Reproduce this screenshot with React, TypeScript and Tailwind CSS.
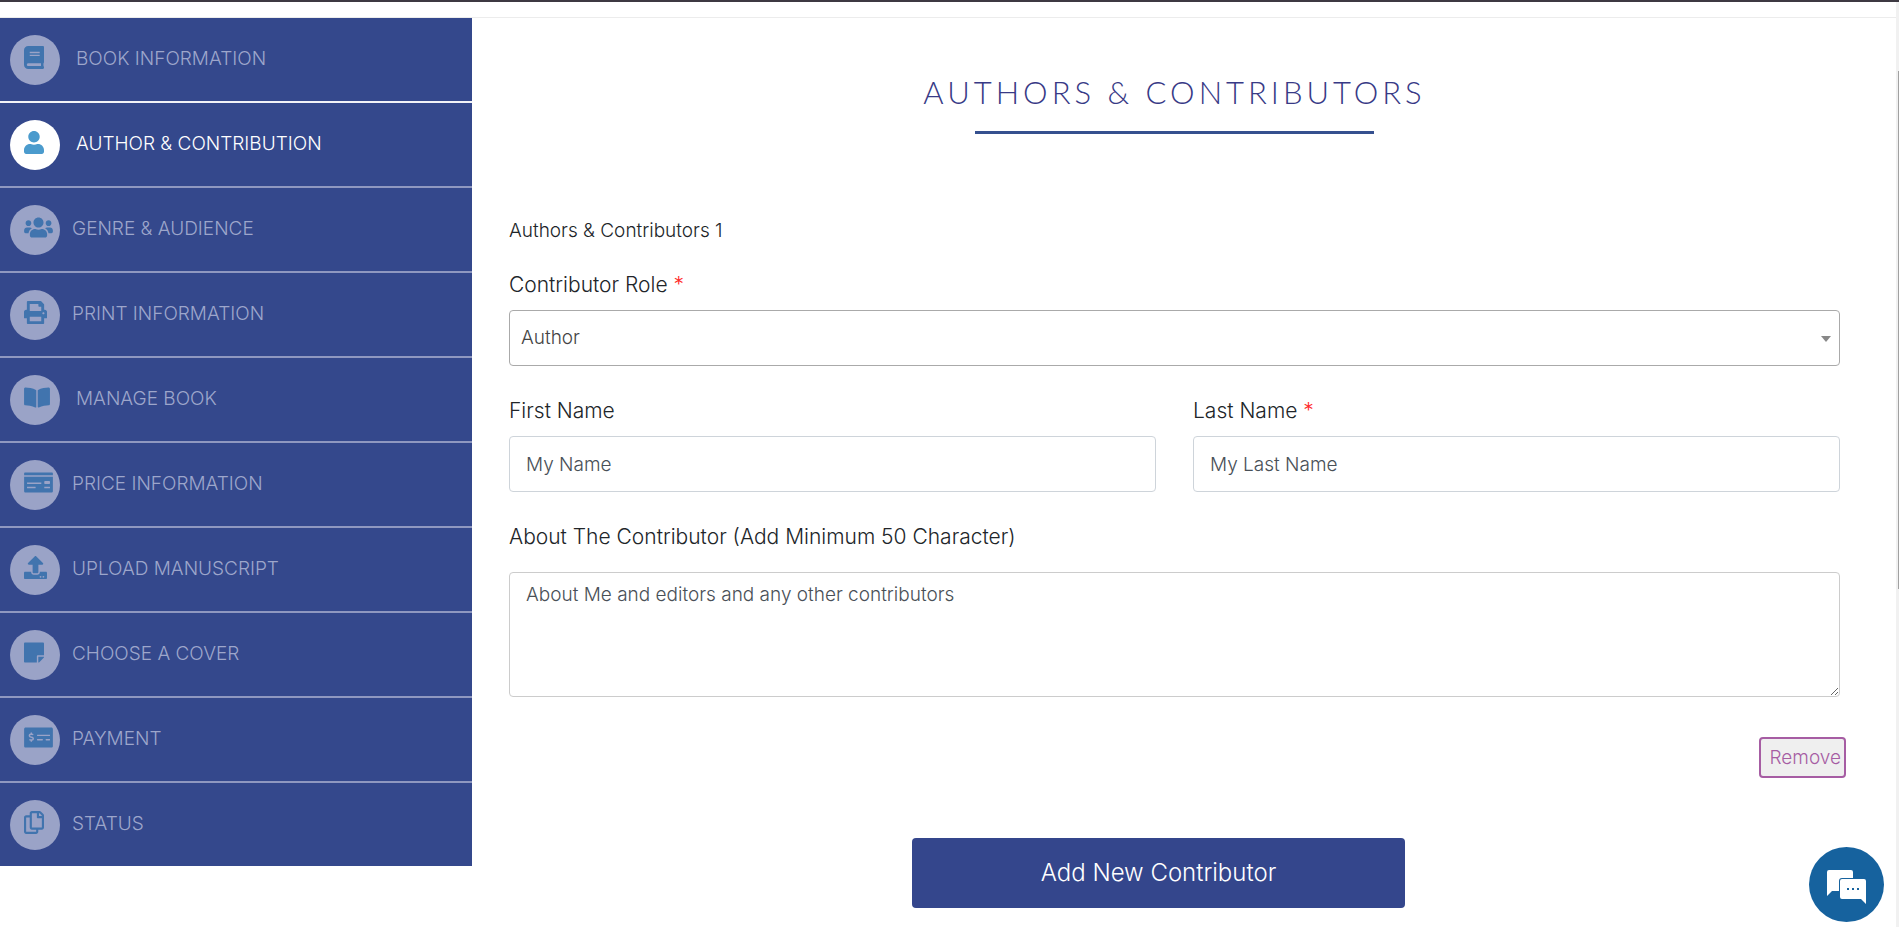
import {ReactNode, useState} from "react";
import {
    FaBook,
    FaBookOpen,
    FaMoneyCheck,
    FaMoneyCheckAlt,
    FaRegCopy,
    FaStickyNote,
    FaUpload,
    FaUser,
    FaUsers
} from "react-icons/fa";

type Step = {
    label: string
    icon: ReactNode
    wide?: boolean
}

const PrintIcon = () => (
    <svg viewBox="0 0 512 512" className="w-[23px] h-[23px]" fill="currentColor" aria-hidden="true">
        <path d="M464 192h-16V81.941a24 24 0 0 0-7.029-16.97L383.029 7.029A24 24 0 0 0 366.059 0H88C74.745 0 64 10.745 64 24v168H48c-26.51 0-48 21.49-48 48v132c0 6.627 5.373 12 12 12h52v104c0 13.255 10.745 24 24 24h336c13.255 0 24-10.745 24-24V384h52c6.627 0 12-5.373 12-12V240c0-26.51-21.49-48-48-48zm-80 256H128v-96h256v96zM128 224V64h192v40c0 13.2 10.8 24 24 24h40v96H128zm304 72c-13.254 0-24-10.746-24-24s10.746-24 24-24 24 10.746 24 24-10.746 24-24 24z"/>
    </svg>
);

const STEPS: Step[] = [
    {label: 'Book Information', icon: <FaBook className="w-5 h-[23px]"/>, wide: true},
    {label: 'Author & Contribution', icon: <FaUser className="w-5 h-[23px]"/>, wide: true},
    {label: 'Genre & Audience', icon: <FaUsers className="w-[29px] h-[23px]"/>},
    {label: 'Print Information', icon: <PrintIcon/>},
    {label: 'Manage Book', icon: <FaBookOpen className="w-[26px] h-[23px]"/>, wide: true},
    {label: 'Price Information', icon: <FaMoneyCheck className="w-[29px] h-[23px]"/>},
    {label: 'Upload Manuscript', icon: <FaUpload className="w-[23px] h-[23px]"/>},
    {label: 'Choose a Cover', icon: <FaStickyNote className="w-5 h-[23px]"/>},
    {label: 'Payment', icon: <FaMoneyCheckAlt className="w-[29px] h-[23px]"/>},
    {label: 'Status', icon: <FaRegCopy className="w-5 h-[23px]"/>},
];

const ACTIVE_STEP = 1;

const borderFor = (index: number) => {
    if (index === STEPS.length - 1) {
        return '';
    }
    return index === ACTIVE_STEP - 1 ? 'border-b-2 border-[#f2f3f8]' : 'border-b-2 border-[#8f98c0]';
}

const Sidebar = () => (
    <nav className="w-1/4 shrink-0 self-start bg-[#34488c]">
        <ul>
            {STEPS.map((step, index) => {
                const active = index === ACTIVE_STEP;
                return (
                    <li key={step.label} className={borderFor(index)}>
                        <a href="#" aria-current={active ? 'step' : undefined}
                           className={`flex items-center h-[83px] px-2.5 ${step.wide ? 'gap-4' : 'gap-3'}`}>
                            <span className={`flex items-start w-[50px] h-[50px] shrink-0 rounded-full pl-3.5 pt-[11px]
                                ${active ? 'bg-white text-[#4b9bcd]' : 'bg-[#9aa3c7] text-[#4174ae]'}`}>
                                <span className="shrink-0">{step.icon}</span>
                            </span>
                            <span className={`uppercase text-[19px] font-light ${active ? 'text-white' : 'text-[#9da6cb]'}`}>
                                {step.label}
                            </span>
                        </a>
                    </li>
                );
            })}
        </ul>
    </nav>
);

const Required = () => <span className="text-[#ff2a2a]">*</span>;

const LABEL = 'block text-[21px] leading-[30px] font-light text-[#212529]';
const INPUT = 'block w-full h-14 mt-2.5 rounded border border-[#ced4da] px-4 text-[19px] font-light text-[#495057]';

const ContributorForm = () => {
    const [role, setRole] = useState('Author');

    return (
        <form className="pl-[37px] pr-12" onSubmit={(e) => e.preventDefault()}>
            <p className="text-[19px] leading-6 font-light text-[#212529]">Authors &amp; Contributors 1</p>

            <label htmlFor="role" className={`${LABEL} mt-[27px]`}>Contributor Role <Required/></label>
            <div className="relative mt-2.5">
                <select id="role" value={role} onChange={(e) => setRole(e.target.value)}
                        className="block w-full h-14 appearance-none rounded border border-[#aaa] bg-white px-[11px] text-[19px] font-light text-[#444]">
                    <option>Author</option>
                    <option>Editor</option>
                    <option>Illustrator</option>
                </select>
                <svg className="absolute right-[9px] top-[26px] pointer-events-none" width="10" height="6" viewBox="0 0 10 6">
                    <path d="M0 0h10L5 6z" fill="#888"/>
                </svg>
            </div>

            <div className="grid grid-cols-2 gap-[37px] mt-[30px]">
                <div>
                    <label htmlFor="first" className={LABEL}>First Name</label>
                    <input id="first" type="text" defaultValue="My Name" className={INPUT}/>
                </div>
                <div>
                    <label htmlFor="last" className={LABEL}>Last Name <Required/></label>
                    <input id="last" type="text" defaultValue="My Last Name" className={INPUT}/>
                </div>
            </div>

            <label htmlFor="about" className={`${LABEL} mt-[30px]`}>About The Contributor (Add Minimum 50 Character)</label>
            <textarea id="about" defaultValue="About Me and editors and any other contributors"
                      className="block w-full h-[125px] mt-5 rounded border border-[#ccc] px-4 py-2 text-[19px] leading-7 font-light text-[#495057]"/>

            <div className="flex justify-end mt-10 -mr-1.5">
                <button type="button"
                        className="h-[41px] rounded border-2 border-[#a65da3] bg-[#efefef] pl-[9px] pr-[3px] text-[19px] leading-none font-light text-[#a65da3]">
                    Remove
                </button>
            </div>

            <div className="flex justify-center mt-[60px] pr-8">
                <button type="button" className="w-[38%] h-[70px] rounded bg-[#34468c] text-2xl font-light text-white">
                    Add New Contributor
                </button>
            </div>
        </form>
    );
}

const ChatButton = () => (
    <button type="button" aria-label="Chat" className="fixed right-[15px] bottom-[5px] w-[75px] h-[75px] rounded-full bg-[#16629e]">
        <svg viewBox="0 0 75 75" className="w-full h-full" aria-hidden="true">
            <path d="M20 23h22q2 0 2 2v17q0 2-2 2H23l-5 5V25q0-2 2-2z" fill="#fff"/>
            <path d="M33 32h22q2 0 2 2v23l-5-5H33q-2 0-2-2V34q0-2 2-2z" fill="#fff" stroke="#16629e" strokeWidth="2" paintOrder="stroke"/>
            <path d="M38 41h2v2h-2zM43 41h2v2h-2zM48 41h2v2h-2z" fill="#16629e"/>
        </svg>
    </button>
);

export default function App() {
    return (
        <div className="min-h-screen bg-white font-['Inter',sans-serif]">
            <div className="h-0.5 bg-[#3d3942]"/>
            <div className="h-4 border-b border-[#ececec]"/>
            <div className="flex pr-[11px]">
                <Sidebar/>
                <main className="flex-1 min-w-0">
                    <header className="flex flex-col items-center pt-[54px] pl-[37px] pr-12">
                        <h1 className="font-['Lato',sans-serif] font-light uppercase text-[31px] leading-10 tracking-[4px] text-[#383a86]">
                            Authors &amp; Contributors
                        </h1>
                        <div className="w-[30%] h-[3px] mt-[19px] mb-[85px] bg-[#35508f]"/>
                    </header>
                    <ContributorForm/>
                </main>
            </div>
            <div className="fixed right-0 top-0.5 bottom-0 w-[3px] bg-[#f1f1f1] flex justify-end">
                <div className="w-px h-[56%] mt-[69px] bg-[#a1a1a1]"/>
            </div>
            <ChatButton/>
        </div>
    );
}
